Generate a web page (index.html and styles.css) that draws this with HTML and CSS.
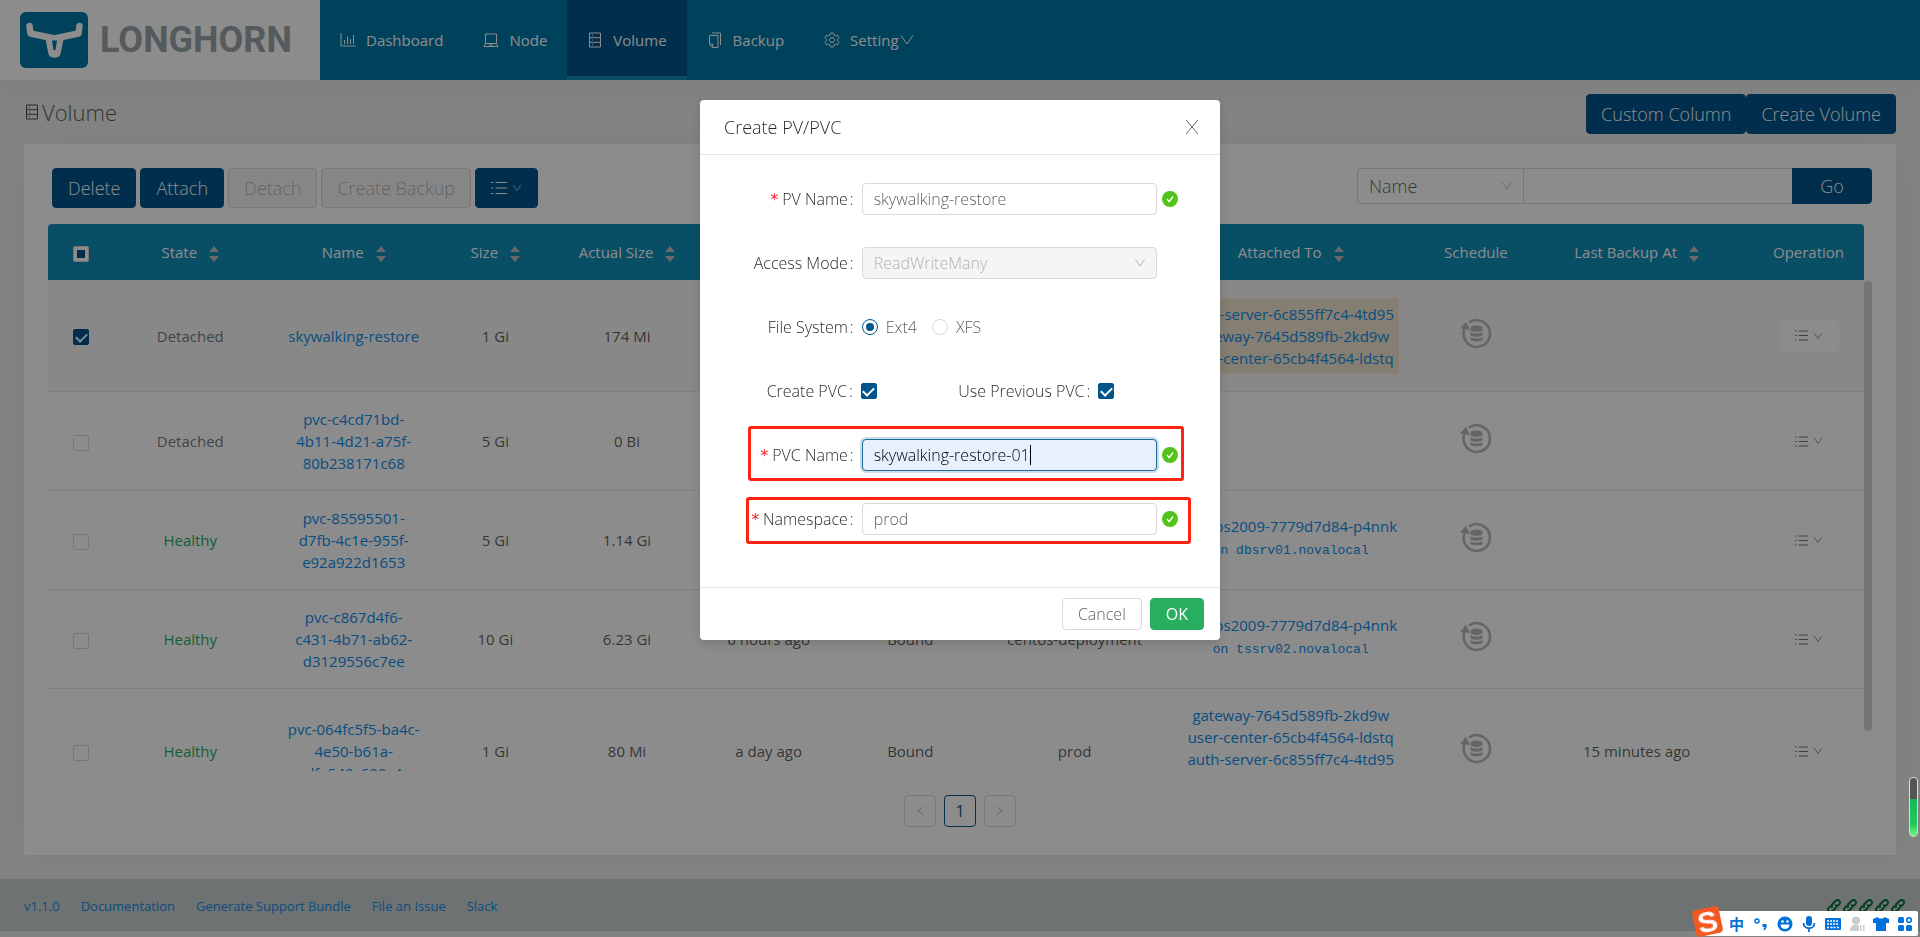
FILE: index.html
```html
<!DOCTYPE html>
<html lang="en">
<head>
    <meta charset="UTF-8">
    <meta name="viewport" content="width=device-width, initial-scale=1.0">
    <title>Longhorn</title>
    <link rel="stylesheet" href="styles.css">
</head>
<body>
    <svg class="sprite" aria-hidden="true">
        <symbol id="i-volume" viewBox="0 0 16 16"><path d="M2.5 1h11v14h-11zM2.5 5.7h11M2.5 10.3h11M5 3.4h1M5 8h1M5 12.6h1"/></symbol>
        <symbol id="i-down" viewBox="0 0 16 16"><path d="M2 3.5l6 8.5 6-8.5"/></symbol>
        <symbol id="i-list" viewBox="0 0 16 16"><path d="M4.5 2.5H16M4.5 8H16M4.5 13.5H16M0 2.5h2M0 8h2M0 13.5h2"/></symbol>
        <symbol id="i-ok" viewBox="0 0 16 16"><circle cx="8" cy="8" r="8" fill="#52c41a" stroke="none"/><path d="M5 8l2.2 2.7L11 5.5" stroke="#fff" stroke-width="1.4"/></symbol>
        <symbol id="i-backup" viewBox="0 0 32 32">
            <path d="M9 5.5A13.4 13.4 0 0 1 30 17 13.2 13.2 0 1 1 4.5 12" stroke-width="2.6"/>
            <path d="M0 11.5L6 5l4 8z" fill="currentColor" stroke="none"/>
            <path d="M10.5 11c0-3.500 12-3.500 12 0v2c0 2.500-12 2.500-12 0zM10.5 15c2 2 10 2 12 0v3c0 2.300-12 2.300-12 0zM10.5 20c2 2 10 2 12 0v2.500c0 2.500-12 2.500-12 0z" fill="currentColor" stroke="none"/>
        </symbol>
        <symbol id="i-chain" viewBox="0 0 16 16"><path d="M6.5 9.5c-1.300-1.300-.8-2.700.2-3.700l2.800-2.800c1.200-1.200 2.800-1.200 3.800-.2s1 2.500-.1 3.600L11.500 8M9.500 6.500c1.300 1.300.8 2.700-.2 3.700L6.500 13c-1.200 1.200-2.800 1.200-3.800.2s-1-2.500.1-3.600L4.500 8" stroke-width="2"/></symbol>
    </svg>

    <header class="header">
        <a class="brand" href="#">
            <svg class="brand-logo" viewBox="0 0 68 56">
                <rect width="68" height="56" rx="6" fill="#0077a8"/>
                <path d="M9.5 14l1 7.500 24 5 24-5 1-7.500" fill="none" stroke="#fff" stroke-width="6.5" stroke-linecap="round" stroke-linejoin="round"/>
                <path d="M25 25h19l-3.500 17c-.8 5-11.200 5-12 0z" fill="#fff"/>
                <path d="M32 28.5h5l-1.500 9.500h-2z" fill="#0077a8"/>
            </svg>
            <span class="brand-name">LONGHORN</span>
        </a>
        <nav class="nav">
            <a href="#"><svg class="icon" viewBox="0 0 16 16"><path d="M1 1v13h15M4.500 12V8M7.500 12V4.500M10.500 12V7M13.500 12V3"/></svg>Dashboard</a>
            <a href="#"><svg class="icon" viewBox="0 0 16 16"><path d="M2.500 2h11v9.500h-11zM2.500 11.500L1 14.500h14l-1.500-3M6 13h4"/></svg>Node</a>
            <a class="active" href="#"><svg class="icon"><use href="#i-volume"/></svg>Volume</a>
            <a href="#"><svg class="icon" viewBox="0 0 16 16"><path d="M2.500 3.500h8.500v12H5.500l-3-3zM2.500 12h3v3.500M5 1h8.500v12"/></svg>Backup</a>
            <a href="#"><svg class="icon" viewBox="0 0 16 16"><circle cx="8" cy="8" r="2.5"/><path d="M6.500 1h3l.5 2 1.500.9 2-.6 1.500 2.600L13.500 7.300v1.400l1.500 1.400-1.500 2.600-2-.6L10 13l-.5 2h-3L6 13l-1.500-.9-2 .6L1 10.100l1.500-1.400V7.300L1 5.900l1.500-2.600 2 .6L6 3z"/></svg>Setting<svg class="icon setting-arrow"><use href="#i-down"/></svg></a>
        </nav>
    </header>

    <div class="page-head">
        <h1><svg class="icon"><use href="#i-volume"/></svg>Volume</h1>
        <div>
            <button class="btn btn-primary" type="button">Custom Column</button><button class="btn btn-primary" type="button">Create Volume</button>
        </div>
    </div>

    <main class="card">
        <div class="toolbar">
            <div class="actions">
                <button class="btn btn-primary" type="button">Delete</button>
                <button class="btn btn-primary" type="button">Attach</button>
                <button class="btn" type="button" disabled>Detach</button>
                <button class="btn" type="button" disabled>Create Backup</button>
                <button class="btn btn-primary btn-more" type="button" aria-label="More actions"><svg class="icon"><use href="#i-list"/></svg><svg class="icon icon-sm"><use href="#i-down"/></svg></button>
            </div>
            <form class="search">
                <div class="select">
                    <select aria-label="Search field"><option>Name</option></select>
                    <svg class="icon"><use href="#i-down"/></svg>
                </div>
                <input type="text" aria-label="Search text">
                <button class="btn btn-primary" type="button">Go</button>
            </form>
        </div>

        <div class="table-wrap">
            <div class="table-main">
                <table>
                    <colgroup>
                        <col class="c-check"><col class="c-state"><col class="c-name"><col class="c-size"><col class="c-actual"><col class="c-created"><col class="c-pv"><col class="c-ns"><col class="c-attached"><col class="c-schedule"><col class="c-last"><col class="c-op">
                    </colgroup>
                    <thead>
                        <tr>
                            <th><input class="check partial" type="checkbox" aria-label="Select all"></th>
                            <th>State<i class="sorter"></i></th>
                            <th>Name<i class="sorter"></i></th>
                            <th>Size<i class="sorter"></i></th>
                            <th>Actual Size<i class="sorter"></i></th>
                            <th></th>
                            <th></th>
                            <th></th>
                            <th>Attached To<i class="sorter"></i></th>
                            <th>Schedule</th>
                            <th>Last Backup At<i class="sorter"></i></th>
                            <th>Operation</th>
                        </tr>
                    </thead>
                    <tbody>
                        <tr class="selected">
                            <td><input class="check" type="checkbox" aria-label="Select volume" checked></td>
                            <td class="detached">Detached</td>
                            <td><a href="#">skywalking-restore</a></td>
                            <td>1 Gi</td>
                            <td>174 Mi</td>
                            <td></td><td></td><td></td>
                            <td><div class="last-attached"><a href="#">auth-server-6c855ff7c4-4td95</a><a href="#">gateway-7645d589fb-2kd9w</a><a href="#">user-center-65cb4f4564-ldstq</a></div></td>
                            <td><svg class="schedule"><use href="#i-backup"/></svg></td>
                            <td></td>
                            <td><button class="row-btn" type="button" aria-label="Operation"><svg class="icon"><use href="#i-list"/></svg><svg class="icon icon-sm"><use href="#i-down"/></svg></button></td>
                        </tr>
                        <tr>
                            <td><input class="check" type="checkbox" aria-label="Select volume"></td>
                            <td class="detached">Detached</td>
                            <td><a href="#">pvc-c4cd71bd-<br>4b11-4d21-a75f-<br>80b238171c68</a></td>
                            <td>5 Gi</td>
                            <td>0 Bi</td>
                            <td></td><td></td><td></td><td></td>
                            <td><svg class="schedule"><use href="#i-backup"/></svg></td>
                            <td></td>
                            <td><button class="row-btn" type="button" aria-label="Operation"><svg class="icon"><use href="#i-list"/></svg><svg class="icon icon-sm"><use href="#i-down"/></svg></button></td>
                        </tr>
                        <tr>
                            <td><input class="check" type="checkbox" aria-label="Select volume"></td>
                            <td class="healthy">Healthy</td>
                            <td><a href="#">pvc-85595501-<br>d7fb-4c1e-955f-<br>e92a922d1653</a></td>
                            <td>5 Gi</td>
                            <td>1.14 Gi</td>
                            <td></td><td></td><td></td>
                            <td><a href="#">centos2009-7779d7d84-p4nnk</a><pre>on dbsrv01.novalocal</pre></td>
                            <td><svg class="schedule"><use href="#i-backup"/></svg></td>
                            <td></td>
                            <td><button class="row-btn" type="button" aria-label="Operation"><svg class="icon"><use href="#i-list"/></svg><svg class="icon icon-sm"><use href="#i-down"/></svg></button></td>
                        </tr>
                        <tr>
                            <td><input class="check" type="checkbox" aria-label="Select volume"></td>
                            <td class="healthy">Healthy</td>
                            <td><a href="#">pvc-c867d4f6-<br>c431-4b71-ab62-<br>d3129556c7ee</a></td>
                            <td>10 Gi</td>
                            <td>6.23 Gi</td>
                            <td>6 hours ago</td>
                            <td>Bound</td>
                            <td>centos-deployment</td>
                            <td><a href="#">centos2009-7779d7d84-p4nnk</a><pre>on tssrv02.novalocal</pre></td>
                            <td><svg class="schedule"><use href="#i-backup"/></svg></td>
                            <td></td>
                            <td><button class="row-btn" type="button" aria-label="Operation"><svg class="icon"><use href="#i-list"/></svg><svg class="icon icon-sm"><use href="#i-down"/></svg></button></td>
                        </tr>
                        <tr>
                            <td><input class="check" type="checkbox" aria-label="Select volume"></td>
                            <td class="healthy">Healthy</td>
                            <td><a href="#">pvc-064fc5f5-ba4c-<br>4e50-b61a-<br>dfe549c609c4</a></td>
                            <td>1 Gi</td>
                            <td>80 Mi</td>
                            <td>a day ago</td>
                            <td>Bound</td>
                            <td>prod</td>
                            <td><a href="#">gateway-7645d589fb-2kd9w</a><a href="#">user-center-65cb4f4564-ldstq</a><a href="#">auth-server-6c855ff7c4-4td95</a><pre>&nbsp;</pre></td>
                            <td><svg class="schedule"><use href="#i-backup"/></svg></td>
                            <td>15 minutes ago</td>
                            <td><button class="row-btn" type="button" aria-label="Operation"><svg class="icon"><use href="#i-list"/></svg><svg class="icon icon-sm"><use href="#i-down"/></svg></button></td>
                        </tr>
                    </tbody>
                </table>
            </div>
            <div class="rail"><div class="thumb"></div></div>
        </div>

        <div class="pagination">
            <button type="button" disabled aria-label="Previous page"><svg class="icon" viewBox="0 0 16 16"><path d="M12 3L5 8l7 5"/></svg></button>
            <button type="button" class="current">1</button>
            <button type="button" disabled aria-label="Next page"><svg class="icon" viewBox="0 0 16 16"><path d="M4 3l7 5-7 5"/></svg></button>
        </div>
    </main>

    <footer class="footer">
        <a href="#">v1.1.0</a>
        <a href="#">Documentation</a>
        <a href="#">Generate Support Bundle</a>
        <a href="#">File an Issue</a>
        <a href="#">Slack</a>
        <div class="chains">
            <svg><use href="#i-chain"/></svg><svg><use href="#i-chain"/></svg><svg><use href="#i-chain"/></svg><svg><use href="#i-chain"/></svg><svg><use href="#i-chain"/></svg>
        </div>
    </footer>

    <div class="mask">
        <div class="modal" role="dialog" aria-labelledby="modal-title">
            <div class="modal-head">
                <h2 id="modal-title">Create PV/PVC</h2>
                <button type="button" aria-label="Close"><svg class="icon" viewBox="0 0 16 16"><path d="M2 1l12 14M14 1l-12 14"/></svg></button>
            </div>
            <form class="modal-body">
                <div class="field">
                    <label class="required" for="pv">PV Name</label>
                    <input class="text" id="pv" type="text" value="skywalking-restore">
                    <svg class="icon"><use href="#i-ok"/></svg>
                </div>
                <div class="field">
                    <label for="mode">Access Mode</label>
                    <div class="select">
                        <select class="text" id="mode" disabled><option>ReadWriteMany</option></select>
                        <svg class="icon"><use href="#i-down"/></svg>
                    </div>
                </div>
                <div class="field">
                    <span class="label">File System</span>
                    <div class="radios">
                        <input type="radio" name="fs" id="ext4" checked><label for="ext4">Ext4</label>
                        <input type="radio" name="fs" id="xfs"><label for="xfs">XFS</label>
                    </div>
                </div>
                <div class="field field-double">
                    <label for="create">Create PVC</label>
                    <input class="check" id="create" type="checkbox" checked>
                    <label for="previous">Use Previous PVC</label>
                    <input class="check" id="previous" type="checkbox" checked>
                </div>
                <div class="field">
                    <label class="required" for="pvc">PVC Name</label>
                    <div class="caret-box"><input class="text focused" id="pvc" type="text" value="skywalking-restore-01"></div>
                    <svg class="icon"><use href="#i-ok"/></svg>
                    <div class="marker marker-pvc"></div>
                </div>
                <div class="field">
                    <label class="required" for="ns">Namespace</label>
                    <input class="text" id="ns" type="text" value="prod">
                    <svg class="icon"><use href="#i-ok"/></svg>
                    <div class="marker marker-ns"></div>
                </div>
            </form>
            <div class="modal-foot">
                <button type="button">Cancel</button>
                <button type="button" class="ok">OK</button>
            </div>
        </div>
    </div>

    <div class="battery"><div class="battery-level"></div></div>

    <div class="ime">
        <div class="ime-logo">S</div>
        <span class="ime-lang">中</span>
        <svg viewBox="0 0 16 16"><circle cx="4" cy="5" r="2" fill="none" stroke="currentColor" stroke-width="1.5"/><path d="M9.500 8h4v3c0 2-1.500 3-3 3.200v-1.500c.8-.3 1-.9 1-1.700h-2z"/></svg>
        <svg viewBox="0 0 16 16"><circle cx="8" cy="8" r="7.5"/><path d="M3.500 8.500h9c0 6-9 6-9 0z" fill="#fff"/><circle cx="5.5" cy="5.5" r="1.3" fill="#fff"/><circle cx="10.5" cy="5.5" r="1.3" fill="#fff"/></svg>
        <svg viewBox="0 0 16 16"><rect x="5" y="0" width="6" height="10" rx="3"/><path d="M2.500 7c0 7 11 7 11 0M8 12v4" fill="none" stroke="currentColor" stroke-width="1.8"/></svg>
        <svg viewBox="0 0 16 16"><rect x="0" y="2" width="16" height="12" rx="1"/><path d="M2 5h12M2 8h12M2 11.500h2M5.500 11.500h5M12 11.500h2" fill="none" stroke="#fff" stroke-width="1.6" stroke-dasharray="2 1"/></svg>
        <svg class="ime-user" viewBox="0 0 16 16"><circle cx="7" cy="4.5" r="4"/><path d="M1 15c0-8 9-7 9-5v5zM11 9h1.500v6H11zM14 9h1.500v6H14z"/></svg>
        <svg viewBox="0 0 16 16"><path d="M4.500 1c1 2 6 2 7 0L16 3v4h-3v8H3V7H0V3z"/></svg>
        <svg viewBox="0 0 16 16"><rect x="1" y="1" width="6" height="6" rx="1.5"/><rect x="1" y="9" width="6" height="6" rx="1.5"/><rect x="9" y="9" width="6" height="6" rx="1.5"/><circle cx="12" cy="4" r="2.3" fill="none" stroke="currentColor" stroke-width="1.6"/></svg>
    </div>
</body>
</html>
```
FILE: styles.css
```css
* {
    box-sizing: border-box;
}
body {
    margin: 0;
    min-height: 100vh;
    background: #edf0ef;
    color: rgba(0, 0, 0, .65);
    font: 300 16px/22px "Open Sans", "Noto Sans", sans-serif;
}
a {
    color: #108ee9;
    text-decoration: none;
}
button, input, select {
    font: inherit;
    color: inherit;
    margin: 0;
}
.sprite {
    display: none;
}
.icon {
    width: 16px;
    height: 16px;
    flex: none;
    fill: none;
    stroke: currentColor;
}
.icon-sm {
    width: 10px;
    height: 10px;
}

/* header */
.header {
    display: flex;
    height: 80px;
    background: #0077a8;
    box-shadow: 0 4px 40px 10px rgba(0, 0, 0, .03);
}
.brand {
    display: flex;
    align-items: center;
    gap: 12px;
    width: 320px;
    padding-left: 20px;
    background: #fff;
}
.brand-logo {
    width: 68px;
    height: 56px;
}
.brand-name {
    font: 700 36px/40px Roboto, sans-serif;
    color: #9ba5a9;
}
.nav {
    display: flex;
    font-size: 15px;
    font-weight: 400;
}
.nav a {
    display: flex;
    align-items: center;
    padding: 3px 20px 0;
    border-bottom: 4px solid transparent;
    color: #fff;
}
.nav a .icon {
    margin-right: 10px;
}
.nav a .setting-arrow {
    margin-right: 0;
}
.nav .active {
    background: #00558b;
    border-color: #108eb9;
}

/* page */
.page-head {
    display: flex;
    justify-content: space-between;
    align-items: center;
    height: 64px;
    padding: 4px 24px 0;
}
.page-head h1 {
    display: flex;
    align-items: center;
    gap: 2px;
    margin: 0;
    font-size: 22px;
    line-height: 24px;
    padding-bottom: 4px;
    font-weight: 300;
}
.btn {
    height: 40px;
    padding: 0 14px;
    border: 1px solid #d9d9d9;
    border-radius: 4px;
    font-size: 18px;
}
.btn:disabled {
    background: #f5f5f5;
    color: rgba(0, 0, 0, .3);
}
.btn-primary {
    background: #00558b;
    border-color: #00558b;
    color: #fff;
}
.card {
    margin: 0 24px 24px;
    padding: 24px 24px 28px;
    background: #fff;
    box-shadow: 4px 4px 40px 0 rgba(0, 0, 60, .04);
}
.toolbar {
    display: flex;
    justify-content: space-between;
    align-items: flex-start;
    margin-bottom: 16px;
}
.actions {
    display: flex;
    gap: 4px;
    padding-left: 4px;
}
.actions .btn {
    padding: 0 15px;
}
.btn-more {
    display: flex;
    align-items: center;
    gap: 5px;
}
.search {
    display: flex;
    width: 515px;
}
.select {
    position: relative;
}
.select select {
    width: 100%;
    appearance: none;
    opacity: 1;
}
.select .icon {
    position: absolute;
    right: 11px;
    top: 50%;
    width: 12px;
    margin-top: -8px;
    color: rgba(0, 0, 0, .35);
}
.search .select {
    width: 167px;
}
.search select, .search input {
    height: 36px;
    padding: 0 11px;
    border: 1px solid #d9d9d9;
    background: #fff;
    font-size: 18px;
}
.search select {
    border-radius: 4px 0 0 4px;
}
.search input {
    flex: 1;
    min-width: 0;
    border-width: 1px 0;
}
.search .btn {
    width: 80px;
    height: 36px;
    border-radius: 0 4px 4px 0;
}

/* volume table */
.table-wrap {
    display: flex;
    max-height: 547px;
    overflow: hidden;
}
.table-main {
    flex: 1;
}
table {
    width: 100%;
    table-layout: fixed;
    border-collapse: separate;
    border-spacing: 0;
    font-size: 15px;
    font-weight: 400;
    text-align: center;
}
.c-check { width: 66px; }
.c-state { width: 8.4%; }
.c-name { width: 9.6%; }
.c-size { width: 6%; }
.c-actual { width: 8.5%; }
.c-created { width: 7.1%; }
.c-pv { width: 8.5%; }
.c-ns { width: 9.6%; }
.c-attached { width: 14.2%; }
.c-schedule { width: 6.2%; }
.c-last { width: 11.5%; }
th {
    height: 56px;
    padding: 0;
    background: #108eb9;
    color: #fff;
    font-weight: 400;
}
th:first-child {
    border-radius: 4px 0 0 0;
}
th:last-child {
    border-radius: 0 4px 0 0;
}
th:last-child, td:last-child {
    padding-left: 12px;
}
td {
    height: 99px;
    padding: 0;
    border-bottom: 1px solid #e9e9e9;
}
td a {
    display: block;
}
tr:last-child td {
    height: 125px;
}
.selected td {
    height: 112px;
    background: #f8f8f8;
}
.detached {
    color: rgba(0, 0, 0, .55);
}
.healthy {
    color: #27ae5f;
}
.last-attached {
    display: inline-block;
    padding: 5px;
    background: #f1e7d0;
    vertical-align: middle;
}
pre {
    margin: 0;
    font: 13px/28px "Liberation Mono", monospace;
    color: #108ee9;
}
.sorter {
    display: inline-flex;
    flex-direction: column;
    gap: 4px;
    margin-left: 12px;
    vertical-align: middle;
}
.sorter::before, .sorter::after {
    content: "";
    border: 5px solid transparent;
}
.sorter::before {
    border-top: 0;
    border-bottom: 6px solid #bfbfbf;
}
.sorter::after {
    border-bottom: 0;
    border-top: 6px solid #bfbfbf;
}
.check {
    display: inline-grid;
    place-content: center;
    width: 16px;
    height: 16px;
    appearance: none;
    border: 1px solid #d9d9d9;
    border-radius: 2px;
    background: #fff;
    vertical-align: middle;
}
.check:checked {
    background: #00558b;
    border-color: #00558b;
}
.check:checked::before {
    content: "";
    width: 5px;
    height: 9px;
    margin-bottom: 2px;
    border: solid #fff;
    border-width: 0 2px 2px 0;
    transform: rotate(45deg);
}
.partial::before {
    content: "";
    width: 8px;
    height: 8px;
    background: #00558b;
}
.schedule {
    width: 32px;
    height: 32px;
    margin-bottom: 6px;
    fill: none;
    stroke: currentColor;
    color: #b8b8b8;
    vertical-align: middle;
}
.row-btn {
    display: inline-flex;
    align-items: center;
    justify-content: center;
    gap: 5px;
    width: 60px;
    height: 32px;
    padding: 0;
    border: 0;
    border-radius: 4px;
    background: #fff;
    box-shadow: 0 2px 0 rgba(0, 0, 0, .015);
    vertical-align: middle;
}
.row-btn .icon:first-child {
    width: 13px;
    height: 13px;
}
.rail {
    width: 8px;
    height: 507px;
    padding-top: 57px;
}
.thumb {
    height: 100%;
    border-radius: 4px;
    background: #d6d6d6;
}
.pagination {
    display: flex;
    justify-content: center;
    gap: 8px;
    margin-top: 24px;
}
.pagination button {
    display: grid;
    place-items: center;
    width: 32px;
    height: 32px;
    padding: 0;
    border: 1px solid #d9d9d9;
    border-radius: 4px;
    background: #fff;
}
.pagination button:disabled {
    color: rgba(0, 0, 0, .4);
}
.pagination .icon {
    width: 12px;
    height: 12px;
}
.pagination .current {
    border-color: #00558b;
    color: #00558b;
    font-weight: 400;
}

/* footer */
.footer {
    display: flex;
    align-items: center;
    gap: 21px;
    height: 52px;
    padding: 2px 14px 0 24px;
    background: #c9d0d1;
    font-size: 13px;
    font-weight: 400;
}
.chains {
    display: flex;
    margin-left: auto;
    color: #00753a;
}
.chains svg {
    width: 16px;
    height: 16px;
    fill: none;
    stroke: currentColor;
}

/* modal */
.mask {
    position: fixed;
    inset: 0;
    padding-top: 100px;
    background: rgba(0, 0, 0, .45);
}
.modal {
    width: 520px;
    margin: 0 auto;
    border-radius: 4px;
    background: #fff;
    box-shadow: 0 4px 12px rgba(0, 0, 0, .15);
}
.modal-head {
    display: flex;
    justify-content: space-between;
    align-items: center;
    height: 55px;
    padding: 0 18px 0 24px;
    border-bottom: 1px solid #e8e8e8;
    color: rgba(0, 0, 0, .85);
}
.modal-head h2 {
    margin: 0;
    font-size: 18px;
    font-weight: 300;
}
.modal-head button {
    display: flex;
    border: 0;
    background: none;
    padding: 2px;
    color: rgba(0, 0, 0, .6);
}
.modal-body {
    padding: 24px 24px 48px;
}
.field {
    position: relative;
    display: grid;
    grid-template-columns: 7fr 15fr 2fr;
    align-items: center;
    height: 40px;
    margin-bottom: 24px;
}
.field:last-child {
    margin-bottom: 0;
}
.field-double {
    grid-template-columns: 7fr 5fr 7fr 5fr;
}
.field > label, .label {
    padding-right: 8px;
    text-align: right;
    white-space: nowrap;
    color: rgba(0, 0, 0, .85);
    justify-self: end;
}
.field > label::after, .label::after {
    content: ":";
    margin-left: 2px;
}
.field > .required::before {
    content: "*";
    margin-right: 3px;
    color: #f5222d;
    font-family: "DejaVu Sans Mono", monospace;
}
.text {
    width: 100%;
    height: 32px;
    padding: 0 11px;
    border: 1px solid #d9d9d9;
    border-radius: 4px;
    background: #fff;
}
.text:disabled {
    background: #f5f5f5;
    color: rgba(0, 0, 0, .3);
}
.text.focused {
    border-color: #1c6d98;
    background: #e8f0fe;
    box-shadow: 0 0 0 2px rgba(0, 85, 139, .2);
    color: #000;
    outline: 0;
}
.field > .icon {
    margin-left: 5px;
}
.caret-box {
    position: relative;
}
.caret-box::after {
    content: "";
    position: absolute;
    left: 168px;
    top: 6px;
    width: 1px;
    height: 20px;
    background: #000;
}
.radios {
    display: flex;
    align-items: center;
}
.radios label {
    margin: 0 15px 0 8px;
}
.radios input {
    display: grid;
    place-content: center;
    width: 16px;
    height: 16px;
    appearance: none;
    border: 1px solid #d9d9d9;
    border-radius: 50%;
}
.radios input:checked {
    border-color: #00558b;
}
.radios input:checked::before {
    content: "";
    width: 8px;
    height: 8px;
    border-radius: 50%;
    background: #00558b;
}
.marker {
    position: absolute;
    border: 3px solid #ff2212;
    border-radius: 3px;
    pointer-events: none;
}
.marker-pvc {
    inset: -9px 12px -6px 24px;
}
.marker-ns {
    inset: -2px 5px -5px 22px;
}
.modal-foot {
    display: flex;
    justify-content: flex-end;
    gap: 8px;
    padding: 10px 16px;
    border-top: 1px solid #e8e8e8;
}
.modal-foot button {
    height: 32px;
    padding: 0 15px;
    border: 1px solid #d9d9d9;
    border-radius: 4px;
    background: #fff;
}
.modal-foot .ok {
    background: #27ae5f;
    border-color: #27ae5f;
    color: #fff;
    font-weight: 400;
}

/* desktop widgets on top of the page */
.battery {
    position: fixed;
    right: 2px;
    bottom: 100px;
    display: flex;
    align-items: flex-end;
    width: 9px;
    height: 60px;
    border: 1px solid #ddd;
    border-radius: 4px;
    background: #555;
    overflow: hidden;
}
.battery-level {
    width: 100%;
    height: 63%;
    background: linear-gradient(#14b859, #26c95f 70%, #7df58a);
}
.ime {
    position: fixed;
    right: 2px;
    bottom: 1px;
    display: flex;
    align-items: center;
    gap: 8px;
    height: 25px;
    padding-right: 5px;
    border-radius: 2px;
    background: #fff;
    color: #0070dc;
}
.ime svg {
    width: 16px;
    height: 16px;
    fill: currentColor;
}
.ime-logo {
    width: 27px;
    height: 27px;
    margin: -4px 0 0 -10px;
    border-radius: 4px;
    background: #f4581e;
    color: #fff;
    font: 700 30px/27px "Liberation Sans", sans-serif;
    text-align: center;
    transform: rotate(-12deg);
}
.ime-lang {
    width: 16px;
    font: 700 15px/24px "Noto Sans CJK SC", sans-serif;
}
.ime .ime-user {
    color: #ccc;
}
```
